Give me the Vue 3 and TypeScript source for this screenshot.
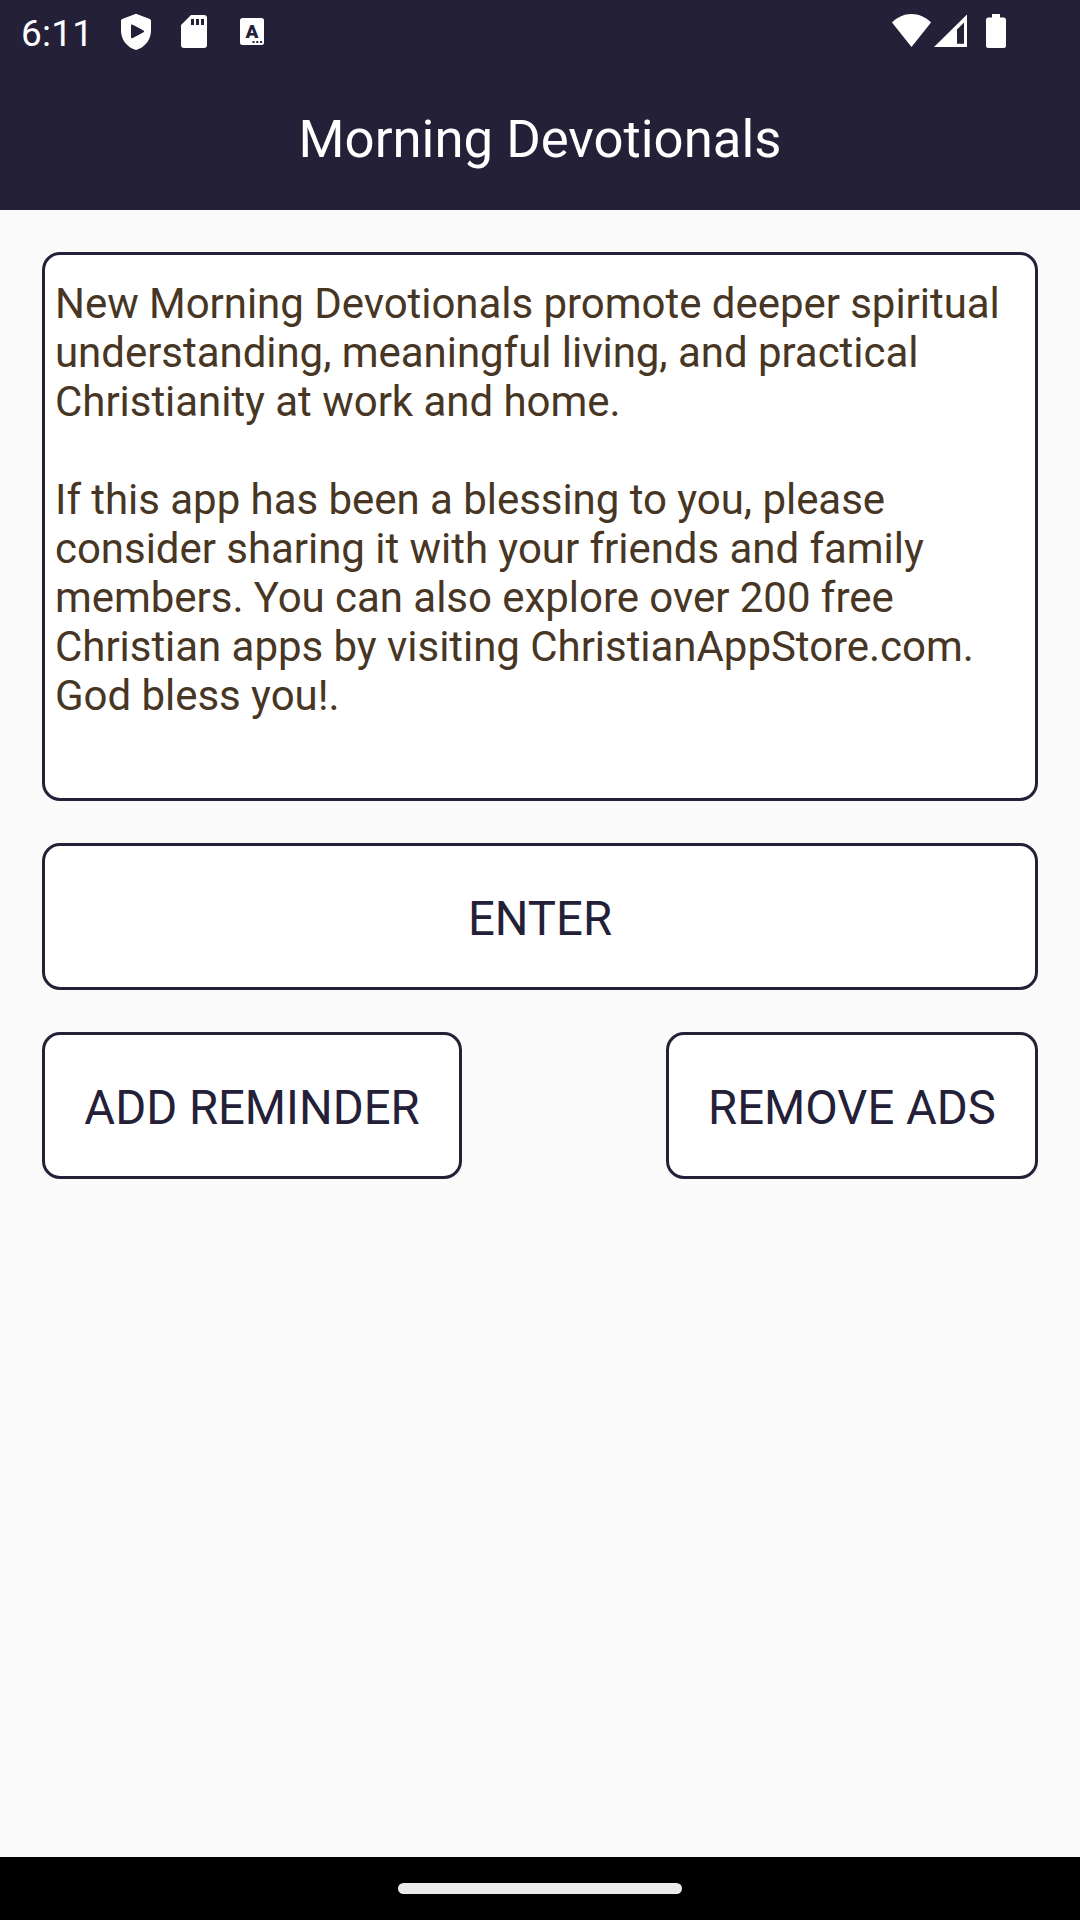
<script setup lang="ts">
const introLines: string[] = [
  'New Morning Devotionals promote deeper spiritual',
  'understanding, meaningful living, and practical',
  'Christianity at work and home.',
]
const shareLines: string[] = [
  'If this app has been a blessing to you, please',
  'consider sharing it with your friends and family',
  'members. You can also explore over 200 free',
  'Christian apps by visiting ChristianAppStore.com.',
  'God bless you!.',
]
const message: string = [...introLines, '', ...shareLines].join('\n')
</script>

<template>
  <div class="screen">
    <header class="header">
      <div class="status">
        <div class="status-left">
          <span class="clock">6:11</span>
          <svg class="shield" width="32" height="38" viewBox="0 0 32 38">
            <path
              fill="#fff"
              fill-rule="evenodd"
              d="M16 .8 29.8 6Q31 6.5 31 7.8V17.500C31 26.500 25 34.500 16 37 7 34.500 1 26.500 1 17.500V7.800Q1 6.500 2.200 6ZM11 12.600V24Q11 26 12.800 25L23.500 19.300Q25 18.300 23.500 17.400L12.800 11.700Q11 10.800 11 12.600Z"
            />
          </svg>
          <svg class="sd" width="26" height="33" viewBox="0 0 26 33">
            <path
              fill="#fff"
              fill-rule="evenodd"
              d="M10 0H23Q26 0 26 3V30Q26 33 23 33H3Q0 33 0 30V10ZM10 4V10H13V4ZM15 4V10H18V4ZM20 4V10H23V4Z"
            />
          </svg>
          <svg class="kbd" width="24" height="27" viewBox="0 0 24 27">
            <rect width="24" height="27" rx="2.500" fill="#fff" />
            <text x="12" y="19.500" text-anchor="middle" class="kbd-letter">A</text>
            <path fill="#242038" d="M12.500 23h2v2h-2zM16.300 23h2v2h-2zM20.100 23h2v2h-2z" />
          </svg>
        </div>
        <div class="status-right">
          <svg width="39" height="34" viewBox="0 0 39 34">
            <path fill="#fff" d="M0 8.500C5.500 3 12 0 19.500 0S33.500 3 39 8.500L19.500 33Z" />
          </svg>
          <svg class="signal" width="33" height="34" viewBox="0 0 33 34">
            <path fill="#fff" fill-rule="evenodd" d="M33 .500V33H0ZM30 8.500 23 15.500V29.700H30Z" />
          </svg>
          <svg class="battery" width="20" height="34" viewBox="0 0 20 34">
            <path
              fill="#fff"
              d="M6 0H14V3.500H17.500Q20 3.500 20 6V31.500Q20 34 17.500 34H2.500Q0 34 0 31.500V6Q0 3.500 2.500 3.500H6Z"
            />
          </svg>
        </div>
      </div>
      <h1 class="title">Morning Devotionals</h1>
    </header>

    <main class="content">
      <p class="message">{{ message }}</p>
      <button class="btn" type="button">ENTER</button>
      <div class="row">
        <button class="btn add" type="button">ADD REMINDER</button>
        <button class="btn remove" type="button">REMOVE ADS</button>
      </div>
    </main>

    <footer class="nav"><span class="handle"></span></footer>
  </div>
</template>

<style>
body {
  margin: 0;
}
</style>

<style scoped>
.screen {
  width: 1080px;
  height: 1920px;
  display: flex;
  flex-direction: column;
  background: #fafafa;
  font-family: Roboto, 'Liberation Sans', sans-serif;
}
svg {
  display: block;
}
.header {
  height: 210px;
  background: #242038;
  color: #fff;
}
.status {
  height: 63px;
  display: flex;
  justify-content: space-between;
  box-sizing: border-box;
  padding: 0 74px 0 21px;
}
.status-left,
.status-right {
  display: flex;
  align-items: flex-start;
}
.status-right {
  padding-top: 14px;
}
.clock {
  width: 99px;
  font-size: 37px;
  line-height: 44px;
  padding-top: 12px;
  letter-spacing: 0.2px;
  white-space: nowrap;
}
.shield {
  margin-top: 13px;
}
.sd {
  margin: 15px 0 0 29px;
}
.kbd {
  margin: 18px 0 0 33px;
}
.kbd-letter {
  font: 900 19px Roboto, sans-serif;
  fill: #242038;
}
.signal {
  margin-left: 3px;
}
.battery {
  margin-left: 19px;
}
.title {
  margin: 0;
  height: 147px;
  line-height: 152px;
  font-size: 52.7px;
  font-weight: 400;
  text-align: center;
}
.content {
  flex: 1;
  display: flex;
  flex-direction: column;
  gap: 42px;
  padding: 42px;
}
.message {
  margin: 0;
  box-sizing: border-box;
  height: 549px;
  padding: 24px 10px;
  border: 3px solid #242038;
  border-radius: 18px;
  background: #fff;
  color: #483624;
  font-size: 42px;
  line-height: 49px;
  letter-spacing: -0.04px;
  white-space: pre;
}
.row {
  display: flex;
  justify-content: space-between;
}
.btn {
  box-sizing: border-box;
  height: 147px;
  padding: 4px 0 0;
  border: 3px solid #242038;
  border-radius: 18px;
  background: #fff;
  color: #242038;
  font: 400 47.25px/56px Roboto, sans-serif;
  text-align: center;
}
.add {
  width: 420px;
}
.remove {
  width: 372px;
}
.nav {
  height: 63px;
  display: flex;
  justify-content: center;
  align-items: center;
  background: #000;
}
.handle {
  width: 284px;
  height: 11px;
  border-radius: 6px;
  background: #ebebeb;
}
</style>
